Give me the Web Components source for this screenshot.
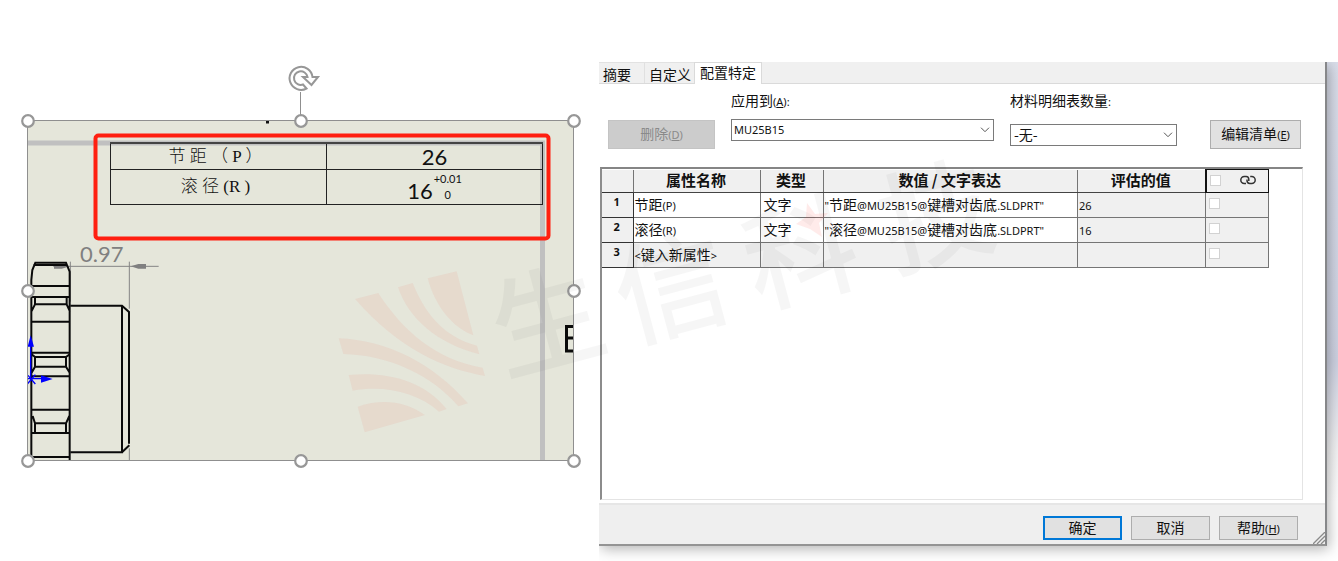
<!DOCTYPE html>
<html lang="zh-CN">
<head>
<meta charset="utf-8">
<title>配置特定属性</title>
<style>
body { margin: 0; background: #fff; color: #111; font: 14px/20px "Noto Sans CJK SC", sans-serif; }
</style>
</head>
<body>
<app-page></app-page>
<script>
const define = (name, html, setup) => {
  const template = document.createElement('template');
  template.innerHTML = html;
  customElements.define(name, class extends HTMLElement {
    connectedCallback() {
      if (this.shadowRoot) return;
      this.attachShadow({ mode: 'open' }).append(template.content.cloneNode(true));
      if (setup) setup(this, this.shadowRoot);
    }
  });
};
const small = 'small { font: 11px/16px "Noto Sans", "Noto Sans CJK SC", sans-serif; }';

define('drawing-table', `
<style>
:host { display: block; }
table { width: 100%; border-collapse: collapse; table-layout: fixed; color: #111; }
td { border: 1px solid #222; padding: 0; text-align: center; height: 34px; }
tr:first-child td { height: 25px; border-top: 2px solid #444; }
.name { font: 17px/20px "Liberation Serif", "Noto Sans CJK SC", serif; font-weight: 300; white-space: pre; padding-right: 6px; }
.value { font: 22px/24px Lato, sans-serif; }
.fit { display: inline-flex; align-items: flex-end; gap: 1px; }
.tol { display: inline-grid; font-size: 11px; line-height: 16px; }
</style>
<table>
  <tr><td class="name">节 距 （ P ）</td><td class="value">26</td></tr>
  <tr><td class="name">滚 径 (R )</td><td class="value"><span class="fit">16<span class="tol"><span>+0.01</span><span>0</span></span></span></td></tr>
</table>`);

define('drawing-view', `
<style>
:host { display: block; position: relative; box-sizing: border-box; background: #e5e6da; padding: 22px 31px 255px 83px; }
.art { position: absolute; left: 0; top: 0; width: 100%; overflow: visible; }
drawing-table { position: relative; }
text { font-family: Lato, sans-serif; }
</style>
<svg class="art" viewBox="27 120 547 341" aria-hidden="true">
  <path d="M28 143H542.500V461" fill="none" stroke="#c0c0c0" stroke-width="5"/>
  <path d="M266 122h3" stroke="#111" stroke-width="3"/>
  <text x="80" y="262" font-size="22" fill="#808080">0.97</text>
  <g transform="translate(10 230) scale(.33333)" fill="none" stroke="#0a0a0a" stroke-width="5">
    <path d="M181 95V215M358 95V236M358 655V690M130 109H446" stroke="#858585" stroke-width="3"/>
    <path d="M132 102H155L180 109 155 116H132ZM408 102H385L362 109 385 116H408Z" fill="#808080" stroke="none"/>
    <path d="M64 690V150L67 120 76 98H168L179 125V690M70 105H172M64 168H180M64 201H180M75 204V223H170V204M64 245L75 223M180 245L170 223M64 275H180M64 368H180M75 381H168V410H75ZM64 372L75 381M180 372L168 381M64 430L75 410M180 430L168 410M64 439H180M64 539H180M68 558L75 580H168L178 558M75 580V608M168 580V608M64 609H180M64 681H180" stroke-width="6"/>
    <path d="M181 227H336L357 246V641M336 227V667H181M336 667L358 646" stroke-width="6"/>
    <path d="M62 446V330M52 446H110M54 436L76 462M76 434L52 462" stroke="#00f" stroke-width="4"/>
    <path d="M62 316L53 350H72ZM128 447L93 436V458Z" fill="#00f" stroke="none"/>
  </g>
  <path d="M574 326.500H566.500V351H574M567 338H574" fill="none" stroke="#0a0a0a" stroke-width="3"/>
  <rect x="27.500" y="120.500" width="546" height="340" fill="none" stroke="#8f8f8f"/>
  <path d="M300.500 92V120" stroke="#8f8f8f"/>
  <g fill="#fff" stroke="#979797" stroke-width="2.200">
    <circle cx="28" cy="121" r="5.800"/><circle cx="301" cy="121" r="5.800"/><circle cx="574" cy="121" r="5.800"/>
    <circle cx="28" cy="291" r="5.800"/><circle cx="574" cy="291" r="5.800"/>
    <circle cx="28" cy="461" r="5.800"/><circle cx="301" cy="461" r="5.800"/><circle cx="574" cy="461" r="5.800"/>
  </g>
  <path d="M312.500 77A11.500 11.500 0 1 0 306.500 88.500L303 84.500A6.800 6.800 0 1 1 307.500 77H303L311.500 85 318 77Z" fill="#fff" stroke="#979797" stroke-width="2"/>
</svg>
<drawing-table></drawing-table>
<svg class="art" viewBox="27 120 547 341" aria-hidden="true">
  <rect x="95.500" y="135.500" width="453" height="103" rx="3" fill="none" stroke="#ff1f10" stroke-width="4"/>
</svg>`);

define('win-button', `
<style>
:host { display: block; }
button { box-sizing: border-box; width: 100%; height: var(--h, 29px); padding: 0 0 2px; border: 1px solid #adadad; background: #e1e1e1; color: #111; font: inherit; line-height: 18px; white-space: nowrap; }
:host([primary]) button { border: 2px solid #0078d7; }
button:disabled { background: #ccc; border-color: #c4c4c4; color: #8a8a8a; }
</style>
<button type="button"><slot></slot></button>`,
(host, root) => { root.querySelector('button').disabled = host.hasAttribute('disabled'); });

define('win-field', `
<style>
:host { display: grid; gap: var(--gap, 9px); }
${small}
.box { display: grid; align-items: center; }
.box > * { grid-area: 1 / 1; }
select { appearance: none; box-sizing: border-box; width: 100%; height: 22px; margin: 0; padding: 0 3px 2px; border: 1px solid #7a7a7a; border-radius: 0; background: #fff; color: #111; font: inherit; line-height: 18px; }
:host([latin]) select { font: 11px/20px "Noto Sans", sans-serif; padding: 0 2px; }
svg { justify-self: end; margin-right: 4px; pointer-events: none; }
</style>
<label for="s"></label>
<div class="box"><select id="s"></select>
<svg width="10" height="6" viewBox="0 0 10 6" fill="none" stroke="#555"><path d="M1 .7 5 4.700 9 .7"/></svg></div>`,
(host, root) => {
  const label = root.querySelector('label');
  label.textContent = host.getAttribute('label');
  const key = host.getAttribute('key');
  const s = document.createElement('small');
  s.innerHTML = (key ? '(<u>' + key + '</u>)' : '') + ':';
  label.append(s);
  root.querySelector('select').add(new Option(host.getAttribute('value')));
});

define('tab-strip', `
<style>
:host { display: block; background: #f0f0f0; }
nav { display: flex; height: 21px; border-bottom: 1px solid #dadada; }
button { box-sizing: border-box; height: 21px; padding: 1px 4px 0; border: 0; border-top: 1px solid #e2e2e2; background: none; color: #111; font: inherit; line-height: 18px; }
button:first-child { padding-right: 13px; }
button:nth-child(2) { border-left: 1px solid #e0e0e0; padding-right: 3px; }
button[aria-selected=true] { height: 22px; padding: 0 5px 4px; border: 1px solid #dadada; border-bottom: 0; background: #fff; line-height: 16px; }
</style>
<nav role="tablist"><button role="tab">摘要</button><button role="tab">自定义</button><button role="tab" aria-selected="true">配置特定</button></nav>`);

define('prop-table', `
<style>
:host { display: block; min-height: 330px; border: 1px solid #e4e4e4; border-top: 2px solid #858585; border-left: 2px solid #8c8c8c; }
${small}
table { width: calc(100% - 33px); border-collapse: collapse; table-layout: fixed; }
th, td { box-sizing: border-box; height: 25px; padding: 0 2px 3px 1px; border: 1px solid #757575; white-space: nowrap; }
td { text-align: left; line-height: 20px; }
td:nth-child(3) { padding-left: 3px; }
thead th { height: 23px; padding-bottom: 2px; background: #f0f0f0; font-size: 15px; line-height: 20px; border-top: 0; border-bottom-color: #444; }
tr > :first-child { border-left: 0; }
thead th:first-child { border-right: 1px dotted #555; border-bottom: 1px dotted #555; }
tbody th { background: #f0f0f0; border-color: #333; font: bold 11px/14px "Noto Sans", sans-serif; vertical-align: top; padding-top: 2px; }
.off, tr.new td { background: #f0f0f0; }
thead th:last-child { border: 2px solid #111; border-width: 1px 1px 1px 2px; }
.tick { display: flex; align-items: center; gap: 19px; }
input { appearance: none; box-sizing: border-box; display: block; width: 11px; height: 11px; margin: 0 0 0 2px; border: 1px solid #d2d2d2; background: #fff; }
</style>
<table>
  <colgroup><col style="width:31px"><col style="width:127px"><col style="width:63px"><col><col style="width:128px"><col style="width:63px"></colgroup>
  <thead><tr><th></th><th>属性名称</th><th>类型</th><th>数值 / 文字表达</th><th>评估的值</th>
    <th><span class="tick"><input type="checkbox" aria-label="全部链接">
    <svg width="16" height="10" viewBox="0 0 16 10" fill="none" stroke="#333" stroke-width="1.500"><path d="M6 8.500H4.300A3.500 3.500 0 0 1 4.300 1.500H6.200Q8.800 1.500 8.800 4.600V6M10.200 1.500H11.700A3.500 3.500 0 0 1 11.700 8.500H9.800Q7 8.500 7 5.600V4.600"/></svg></span></th></tr></thead>
  <tbody>
    <tr><th>1</th><td>节距<small>(P)</small></td><td>文字</td><td><small>"</small>节距<small>@MU25B15@</small>键槽对齿底<small>.SLDPRT"</small></td><td class="off"><small>26</small></td><td class="off"><input type="checkbox" aria-label="链接 1"></td></tr>
    <tr><th>2</th><td>滚径<small>(R)</small></td><td>文字</td><td><small>"</small>滚径<small>@MU25B15@</small>键槽对齿底<small>.SLDPRT"</small></td><td class="off"><small>16</small></td><td class="off"><input type="checkbox" aria-label="链接 2"></td></tr>
    <tr class="new"><th>3</th><td><small>&lt;</small>键入新属性<small>&gt;</small></td><td></td><td></td><td></td><td><input type="checkbox" aria-label="链接 3"></td></tr>
  </tbody>
</table>`);

define('property-dialog', `
<style>
:host { display: block; background: #fff; border-right: 2px solid #868789; border-bottom: 2px solid #949494; box-shadow: 2px 3px 13px rgba(0,0,0,.3); }
${small}
.bar { display: flex; align-items: flex-start; padding: 6px 24px 18px 9px; }
.bar win-button { margin-top: 30px; }
.del { width: 107px; margin-right: 16px; }
.apply { flex: 1; margin-right: 16px; }
.qty { width: 167px; margin-right: 33px; --gap: 14px; }
.edit { width: 91px; }
prop-table { margin: 0 22px 3px 1px; }
footer { position: relative; display: flex; justify-content: flex-end; gap: 9px; padding: 11px 27px 4px; border-top: 2px solid #e6e6e6; background: #efefef; --h: 24px; }
footer win-button { width: 79px; }
.grip { position: absolute; right: 0; bottom: 0; }
</style>
<tab-strip></tab-strip>
<div class="bar">
  <win-button class="del" disabled>删除<small>(<u>D</u>)</small></win-button>
  <win-field class="apply" label="应用到" key="A" value="MU25B15" latin></win-field>
  <win-field class="qty" label="材料明细表数量" value="-无-"></win-field>
  <win-button class="edit">编辑清单<small>(<u>E</u>)</small></win-button>
</div>
<prop-table></prop-table>
<footer>
  <win-button primary>确定</win-button>
  <win-button>取消</win-button>
  <win-button>帮助<small>(<u>H</u>)</small></win-button>
  <svg class="grip" width="12" height="12" viewBox="0 0 12 12" stroke="#8a8a8a" stroke-width="1.300"><path d="M0 12 12 0M4 12 12 4M8 12 12 8"/></svg>
</footer>`);

define('water-mark', `
<style>
:host { display: block; position: absolute; inset: 0; pointer-events: none; }
svg { display: block; width: 100%; }
text { font: 500 112px "Noto Sans CJK SC", sans-serif; }
</style>
<svg viewBox="0 0 1338 561">
  <g transform="translate(320 240) scale(.33333)" fill="rgba(240,80,60,.08)">
    <path d="M105 177L175 159C250 275 350 360 488 383L495 408C370 385 240 330 105 177Z"/>
    <path d="M234 142L278 129C315 220 370 290 471 317L478 343C350 310 265 235 234 142Z"/>
    <path d="M323 115L410 94 460 286C400 265 345 200 323 115Z"/>
    <path d="M56 295C200 300 340 370 444 490L415 499C330 400 200 345 70 342Z"/>
    <path d="M86 405C200 395 310 420 380 507L357 515C290 455 190 435 98 452Z"/>
    <path d="M113 500C190 475 255 485 315 525L134 577Z"/>
  </g>
  <text transform="translate(504 375) rotate(-15)" x="0 128 262 402" fill="rgba(0,0,0,.035)">生信科技</text>
  <path d="M807 203L815 214 828 213 819 223 822 237 810 229 796 224 806 217Z" fill="rgba(255,60,50,.1)"/>
</svg>`);

define('app-page', `
<style>
:host { display: grid; grid-template-columns: 599fr 739fr; position: relative; overflow: hidden; }
.left { padding: 120px 25px 0 27px; }
.right { margin-top: 62px; padding: 0 11px 16px 0; overflow: hidden; background: linear-gradient(#dadeea 0, #ced2e2 300px, #f4f4f5 390px, #fff 440px); }
</style>
<div class="left"><drawing-view></drawing-view></div>
<div class="right"><property-dialog></property-dialog></div>
<water-mark></water-mark>`);
</script>
</body>
</html>
